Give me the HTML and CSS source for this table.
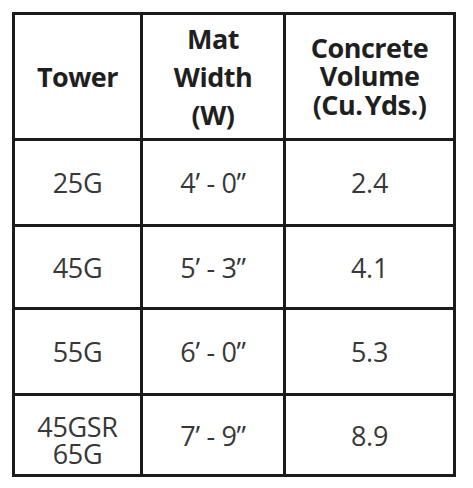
FILE: index.html
```html
<!DOCTYPE html>
<html>
<head>
<meta charset="utf-8">
<link rel="stylesheet" href="styles.css">
</head>
<body>
<table class="spec">
  <thead>
    <tr class="r-head">
      <th class="c1">Tower</th>
      <th class="c2"><span class="l2">Mat<br>Width<br>(W)</span></th>
      <th class="c3"><span class="l3">Concrete<br>Volume<br>(Cu.&#8202;Yds.)</span></th>
    </tr>
  </thead>
  <tbody>
    <tr class="r1"><td>25G</td><td>4’ - 0”</td><td>2.4</td></tr>
    <tr class="r2"><td>45G</td><td>5’ - 3”</td><td>4.1</td></tr>
    <tr class="r3"><td>55G</td><td>6’ - 0”</td><td>5.3</td></tr>
    <tr class="r4"><td class="two"><span class="l4">45GSR<br>65G</span></td><td>7’ - 9”</td><td>8.9</td></tr>
  </tbody>
</table>
</body>
</html>
```
FILE: styles.css
```css
html, body {
  margin: 0;
  background: #ffffff;
}

.spec {
  margin: 12px 0 0 12px;
  border-collapse: separate;
  border-spacing: 0;
  table-layout: fixed;
  width: 444px;
  border-top: 3px solid #1b1b1b;
  border-left: 3px solid #1b1b1b;
  font-family: "Open Sans", "Liberation Sans", sans-serif;
  font-size: 27px;
}

.spec th,
.spec td {
  box-sizing: border-box;
  padding: 0;
  border-right: 3px solid #1b1b1b;
  border-bottom: 3px solid #1b1b1b;
  text-align: center;
  vertical-align: middle;
}

.spec th {
  font-weight: 700;
  color: #1f1f1f;
  letter-spacing: -0.5px;
}

.spec td {
  font-weight: 400;
  color: #383838;
  letter-spacing: -0.3px;
}

.c1 { width: 128px; }
.c2 { width: 143px; }
.c3 { width: 170px; }

.l2 {
  display: block;
  line-height: 38px;
}

.l3 {
  display: block;
  line-height: 28.5px;
}

.spec td.two {
  padding-top: 10px;
}

.l4 {
  display: block;
  line-height: 27.5px;
}

.r-head { height: 126px; }
.r1 { height: 86px; }
.r2 { height: 83px; }
.r3 { height: 86px; }
.r4 { height: 81px; }
```
